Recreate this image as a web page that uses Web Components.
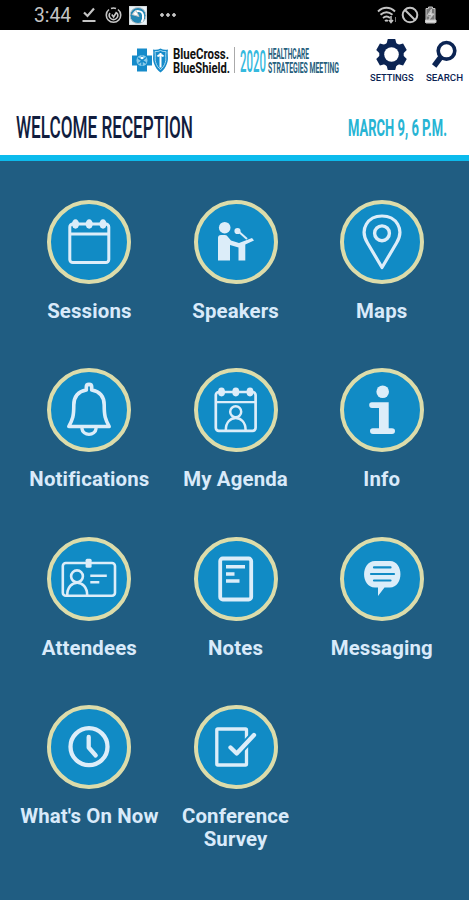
<!DOCTYPE html>
<html lang="en">
<head>
<meta charset="UTF-8">
<meta name="viewport" content="width=device-width, initial-scale=1.0">
<title>Healthcare Strategies Meeting</title>
<style>
  body {
    margin: 0;
    background: #205d82;
    font-family: Roboto, "Liberation Sans", sans-serif;
    overflow: hidden;
  }
</style>
</head>
<body>
<event-app></event-app>

<script>
// One line of text set to an exact width and cap height
class FitText extends HTMLElement {
  connectedCallback() {
    const width = Number(this.getAttribute('width'));
    const cap = Number(this.getAttribute('cap'));
    this.attachShadow({ mode: 'open' });
    this.shadowRoot.innerHTML = `
      <style>
        :host {
          display: block;
          width: ${width}px;
          height: ${cap}px;
        }

        svg {
          display: block;
          overflow: visible;
        }

        text {
          font-family: Roboto, "Liberation Sans", sans-serif;
          font-size: ${cap / 0.711}px;
          font-weight: ${this.getAttribute('weight') || 400};
          fill: currentColor;
        }
      </style>
      <svg width="${width}" height="${cap}"><text></text></svg>
    `;
    const text = this.shadowRoot.querySelector('text');
    text.textContent = this.getAttribute('text');
    const scale = width / text.getComputedTextLength();
    text.setAttribute('transform', `translate(0 ${cap}) scale(${scale} 1)`);
  }
}

class StatusBar extends HTMLElement {
  constructor() {
    super();

    this.attachShadow({ mode: 'open' });
    this.shadowRoot.innerHTML = `
      <style>
        :host {
          display: flex;
          justify-content: space-between;
          align-items: center;
          box-sizing: border-box;
          height: 30px;
          padding: 0 30px 0 34px;
          background: #000;
          color: #c4c4c4;
        }

        div {
          display: flex;
          align-items: center;
        }

        svg {
          display: block;
          fill: none;
          stroke: currentColor;
        }

        .left svg { margin-left: 11px; }
        .left .ring { margin-left: 9px; }
        .left .app { margin-left: 7px; }
        .left .dots { margin-left: 12px; }
        .right { gap: 3px; }
      </style>
      <div class="left">
        <fit-text text="3:44" width="37" cap="14"></fit-text>
        <svg width="14" height="16" viewBox="0 0 14 16" stroke-width="2.200"><path d="M2 5.500L5.500 9 12 1.500M0.500 14h13"/></svg>
        <svg class="ring" width="17" height="17" viewBox="0 0 17 17" stroke-width="1.600"><path d="M4 2.500a7.200 7.200 0 1 0 9 0M6 1.500a7 7 0 0 1 5 0"/><path d="M5 6a4.200 4.200 0 1 0 7 0M6.800 7.500l1.800 2.500 3-5"/></svg>
        <svg class="app" width="18" height="19" viewBox="0 0 18 19" stroke="none">
          <path fill="#e9f4fa" d="M0 0h18v19H0z"/>
          <circle cx="9" cy="9.500" r="8" fill="#2487b5"/>
          <path d="M5 8c1-4 8-4 9 1 .5 3 0 5-1.500 7" fill="none" stroke="#fff" stroke-width="2"/>
          <path d="M3 8.500l4-4 3 6z" fill="#fff"/>
        </svg>
        <svg class="dots" width="18" height="4" viewBox="0 0 18 4" stroke="none"><g fill="#c4c4c4"><circle cx="3" cy="2" r="1.400"/><circle cx="9" cy="2" r="1.400"/><circle cx="15" cy="2" r="1.400"/></g></svg>
      </div>
      <div class="right">
        <svg width="21" height="18" viewBox="0 0 21 18" stroke-width="1.900"><path d="M1 5.500c5-5 12-5 17 0M3.500 8.800c4-3.500 8-3.500 12 0M6 12c2.500-2 4.500-2 7 0M8 15c1-.8 2-.8 3 0"/><path d="M14 10v6M12 14l2 2.500 2-2.500" stroke-width="1.500"/><path d="M18.500 16v-5" stroke="#777" stroke-width="1"/></svg>
        <svg width="18" height="18" viewBox="0 0 18 18" stroke-width="2"><circle cx="9" cy="9" r="7.300"/><path d="M4 4l10 10"/></svg>
        <svg width="17" height="18" viewBox="0 0 17 18" stroke="none"><path fill="#777" d="M6.500 1h4v1.500H13V17H4V2.500h2.500z"/><path fill="#000" d="M9.500 3L5 10h3l-1 4 5-6H9z"/><path fill="#e0e0e0" d="M9.500 4.500L6 9h3l-.6 3 3-4H9zM3.500 14h10.500v2.500H3.500z"/></svg>
      </div>
    `;
  }
}

class BrandBar extends HTMLElement {
  constructor() {
    super();

    this.attachShadow({ mode: 'open' });
    this.shadowRoot.innerHTML = `
      <style>
        :host {
          display: flex;
          align-items: flex-start;
          box-sizing: border-box;
          height: 65px;
          padding: 8px 6.500px 0 132px;
          background: #fff;
          color: #111;
        }

        svg { display: block; }

        .logo {
          display: flex;
          padding-top: 10px;
        }

        .names {
          display: grid;
          gap: 3px;
          margin: 1px 0 0 5px;
        }

        .divider {
          width: 1px;
          height: 26px;
          margin: -1px 5px 0 4px;
          background: #aaa;
        }

        .year {
          margin-top: 1px;
          color: #35b9de;
        }

        .meeting {
          display: grid;
          gap: 2.500px;
          margin: 1px 0 0 2px;
          color: #26607d;
        }

        .actions {
          display: flex;
          gap: 12px;
          margin-left: auto;
          color: #0b2453;
        }

        .action {
          display: grid;
          justify-items: center;
          gap: 3.500px;
        }
      </style>
      <div class="logo">
        <svg width="36" height="26" viewBox="0 0 36 26">
          <path fill="#168bca" d="M5 .500h10v7h5v10h-5v6H5v-6H0v-10h5z"/>
          <circle cx="10" cy="12.500" r="5.500" fill="#8acbea"/>
          <path d="M10 7.500v10M6 10l8 5M14 9.500l-7.500 6" stroke="#168bca" stroke-width="1.500"/>
          <circle cx="10" cy="10" r="1.300" fill="#fff"/>
          <path fill="#168bca" d="M21 1.500q4 1 7.500-1 3.500 2 7.500 1c-1 5 1 9-1 14-1.300 4-3.500 7-6.500 9-3-2-5.200-5-6.500-9-2-5 0-9-1-14z"/>
          <path fill="none" stroke="#a8d9ef" stroke-width="1" d="M23 3.500q3 .5 5.500-1 2.500 1.500 5.500 1c-.8 5 .5 8-.7 11-1 3-2.600 5.500-4.800 7-2.200-1.500-3.800-4-4.800-7-1.200-3 .1-6-.7-11z"/>
          <path d="M28.500 5v14.500M25.500 8.500c1.500-2 4.500-2 6 0" fill="none" stroke="#fff" stroke-width="2"/>
        </svg>
        <div class="names">
          <fit-text text="BlueCross." width="56" cap="10" weight="700"></fit-text>
          <fit-text text="BlueShield." width="57" cap="10" weight="700"></fit-text>
        </div>
        <div class="divider"></div>
        <fit-text class="year" text="2020" width="26" cap="22.500" weight="500"></fit-text>
        <div class="meeting">
          <fit-text text="HEALTHCARE" width="41" cap="10" weight="700"></fit-text>
          <fit-text text="STRATEGIES MEETING" width="71" cap="10" weight="700"></fit-text>
        </div>
      </div>
      <div class="actions">
        <div class="action">
          <svg width="32" height="32" viewBox="-15.500 -16.500 32 32" fill="currentColor">
            <path id="tooth" d="M-5.200 -10L-3.700 -15.500H3.700L5.200 -10V10L3.700 15.500H-3.700L-5.200 10z"/>
            <use href="#tooth" transform="rotate(60)"/>
            <use href="#tooth" transform="rotate(120)"/>
            <circle r="12.200"/>
            <circle r="7.300" fill="#fff"/>
          </svg>
          <fit-text text="SETTINGS" width="43.500" cap="6.500" weight="500"></fit-text>
        </div>
        <div class="action">
          <svg width="32" height="32" viewBox="0 0 32 32" fill="none" stroke="currentColor"><circle cx="18.500" cy="12.800" r="8.300" stroke-width="3.600"/><path d="M12.500 19.500L6.200 28" stroke-width="5.500"/></svg>
          <fit-text text="SEARCH" width="37" cap="6.500" weight="500"></fit-text>
        </div>
      </div>
    `;
  }
}

class SessionBanner extends HTMLElement {
  constructor() {
    super();

    this.attachShadow({ mode: 'open' });
    this.shadowRoot.innerHTML = `
      <style>
        :host {
          display: flex;
          justify-content: space-between;
          align-items: flex-start;
          box-sizing: border-box;
          height: 66px;
          padding: 20px 22px 0 16px;
          background: #fff;
          border-bottom: 6px solid #0cbbed;
        }

        .title { color: #111d3e; }

        .time {
          margin-top: 4px;
          color: #27b4d4;
        }
      </style>
      <fit-text class="title" text="WELCOME RECEPTION" width="177" cap="22.500" weight="500"></fit-text>
      <fit-text class="time" text="MARCH 9, 6 P.M." width="99" cap="17" weight="700"></fit-text>
    `;
  }
}

class MenuTile extends HTMLElement {
  constructor() {
    super();

    this.attachShadow({ mode: 'open' });
    this.shadowRoot.innerHTML = `
      <style>
        :host {
          display: flex;
          flex-direction: column;
          align-items: center;
          color: #d9eafa;
          font-size: 20.400px;
          font-weight: 700;
          line-height: 23.300px;
          text-align: center;
        }

        .disc {
          box-sizing: border-box;
          width: 84px;
          height: 84px;
          margin-bottom: 16px;
          border: 4px solid #dcdcaa;
          border-radius: 50%;
          background: #118bc5;
        }

        ::slotted(svg) {
          display: block;
          width: 84px;
          height: 84px;
          margin: -4px;
          fill: none;
          stroke: #dcedf9;
          stroke-width: 3px;
          stroke-linejoin: round;
        }

        .label {
          max-width: 146px;
          letter-spacing: 0.150px;
        }
      </style>
      <div class="disc"><slot name="icon"></slot></div>
      <div class="label"><slot></slot></div>
    `;
  }
}

class EventApp extends HTMLElement {
  constructor() {
    super();

    this.attachShadow({ mode: 'open' });
    this.shadowRoot.innerHTML = `
      <style>
        :host {
          display: block;
          height: 900px;
          background: #205d82;
        }

        main {
          display: grid;
          grid-template-columns: repeat(3, 146.200px);
          grid-auto-rows: 168.200px;
          padding: 39.300px 0 0 16.300px;
        }

        .solid {
          fill: #dcedf9;
          stroke: none;
        }

        .gap { stroke: #118bc5; }
      </style>
      <status-bar></status-bar>
      <brand-bar></brand-bar>
      <session-banner></session-banner>
      <main>
        <menu-tile>
          <svg slot="icon" viewBox="0 0 84 84">
            <rect x="22.800" y="24" width="39" height="38.500" rx="3"/><path d="M23 34h39"/>
            <g class="solid"><ellipse cx="28.500" cy="24" rx="3.600" ry="4.700"/><ellipse cx="42.200" cy="24" rx="3.600" ry="4.700"/><ellipse cx="56" cy="24" rx="3.600" ry="4.700"/></g>
          </svg>
          Sessions
        </menu-tile>
        <menu-tile>
          <svg slot="icon" viewBox="0 0 84 84">
            <g class="solid"><circle cx="30.700" cy="27.700" r="5.800"/><path d="M24 38q0-3 3-3h4q2 0 3 2l3 3.500 8 2.500 13-5 2 2.500-8.700 4V60.500H44.500V47.500L36 45v15.500H24z"/><circle cx="43.500" cy="31" r="3.100"/></g>
            <path d="M44 31l9 8" stroke-width="2"/>
          </svg>
          Speakers
        </menu-tile>
        <menu-tile>
          <svg slot="icon" viewBox="0 0 84 84"><path d="M42 67.500L27.500 43C19 29 28 16 42 16s23 13 14.500 27z" stroke-width="3.200"/><circle cx="42" cy="33.300" r="7.400" stroke-width="3.400"/></svg>
          Maps
        </menu-tile>
        <menu-tile>
          <svg slot="icon" viewBox="0 0 84 84">
            <path d="M39.300 22v-3c0-3.500 5.400-3.500 5.400 0v3c8 1.500 12.500 7 12.500 15 0 11 1 14 5 21.500H21.800c4-7.500 5-10.500 5-21.500 0-8 4.500-13.500 12.500-15z" stroke-width="3.600"/>
            <path d="M34.800 60c1 8.500 13.400 8.500 14.400 0" stroke-width="3.400"/>
          </svg>
          Notifications
        </menu-tile>
        <menu-tile>
          <svg slot="icon" viewBox="0 0 84 84">
            <rect x="21.800" y="24" width="39.800" height="38.800" rx="3" stroke-width="2.700"/><path d="M22 34.200h40" stroke-width="2.300"/>
            <g class="solid"><ellipse cx="27.500" cy="24" rx="3.500" ry="4.400"/><ellipse cx="41.800" cy="24" rx="3.500" ry="4.400"/><ellipse cx="56" cy="24" rx="3.500" ry="4.400"/></g>
            <circle cx="41.700" cy="43.800" r="5.500" stroke-width="2.500"/><path d="M31.800 62c0-16 19.800-16 19.800 0" stroke-width="2.500"/>
          </svg>
          My Agenda
        </menu-tile>
        <menu-tile>
          <svg slot="icon" viewBox="0 0 84 84"><g class="solid"><circle cx="42.700" cy="23.700" r="6.300"/><path d="M32 34.300h16.700v26H52q3 0 3 2.800T52 66H33q-3 0-3-2.900t3-2.800h6V40h-7q-2.800 0-2.800-2.900t2.800-2.800z"/></g></svg>
          Info
        </menu-tile>
        <menu-tile>
          <svg slot="icon" viewBox="0 0 84 84">
            <rect x="15.800" y="26" width="52.200" height="32.800" rx="3" stroke-width="2.600"/>
            <rect class="solid" x="38.600" y="21.800" width="6" height="9" rx="1.500"/>
            <circle cx="30" cy="39.300" r="5.900" stroke-width="2.600"/><path d="M20.200 58.500c0-17 20-17 20 0" stroke-width="2.600"/>
            <path d="M43.300 38.800h16.500M43.300 45.200h9" stroke-width="2.600"/>
          </svg>
          Attendees
        </menu-tile>
        <menu-tile>
          <svg slot="icon" viewBox="0 0 84 84"><rect x="26.200" y="21.500" width="31" height="41" rx="2.500" stroke-width="3.800"/><path d="M32 29.800h19M32 37h8.500M32 44h13.500" stroke-width="3.400"/></svg>
          Notes
        </menu-tile>
        <menu-tile>
          <svg slot="icon" viewBox="0 0 84 84">
            <path class="solid" d="M35 24h15c14 0 14 26.500 0 26.500h-5.500L38 59v-8.500h-3c-14.500 0-14.500-26.500 0-26.500z"/>
            <path class="gap" d="M34 30.400h16.500M31 37h23M34 43.500h16.500" stroke-width="2.200" stroke-linecap="round"/>
          </svg>
          Messaging
        </menu-tile>
        <menu-tile>
          <svg slot="icon" viewBox="0 0 84 84"><g style="stroke-width: 4.300px" stroke-linecap="round"><circle cx="42" cy="41.700" r="18.500"/><path d="M41.700 32v10.500l7 8"/></g></svg>
          What's On Now
        </menu-tile>
        <menu-tile>
          <svg slot="icon" viewBox="0 0 84 84">
            <rect x="22.800" y="24" width="29.700" height="36" rx="1" style="stroke-width: 3.300px"/>
            <path class="gap" d="M36.500 42.500l6.200 6L60 30" style="stroke-width: 8px"/>
            <path d="M36.500 42.500l6.200 6L60 30" stroke-linecap="round" style="stroke-width: 4.300px"/>
          </svg>
          Conference Survey
        </menu-tile>
      </main>
    `;
  }
}

customElements.define('fit-text', FitText);
customElements.define('status-bar', StatusBar);
customElements.define('brand-bar', BrandBar);
customElements.define('session-banner', SessionBanner);
customElements.define('menu-tile', MenuTile);
customElements.define('event-app', EventApp);
</script>
</body>
</html>
